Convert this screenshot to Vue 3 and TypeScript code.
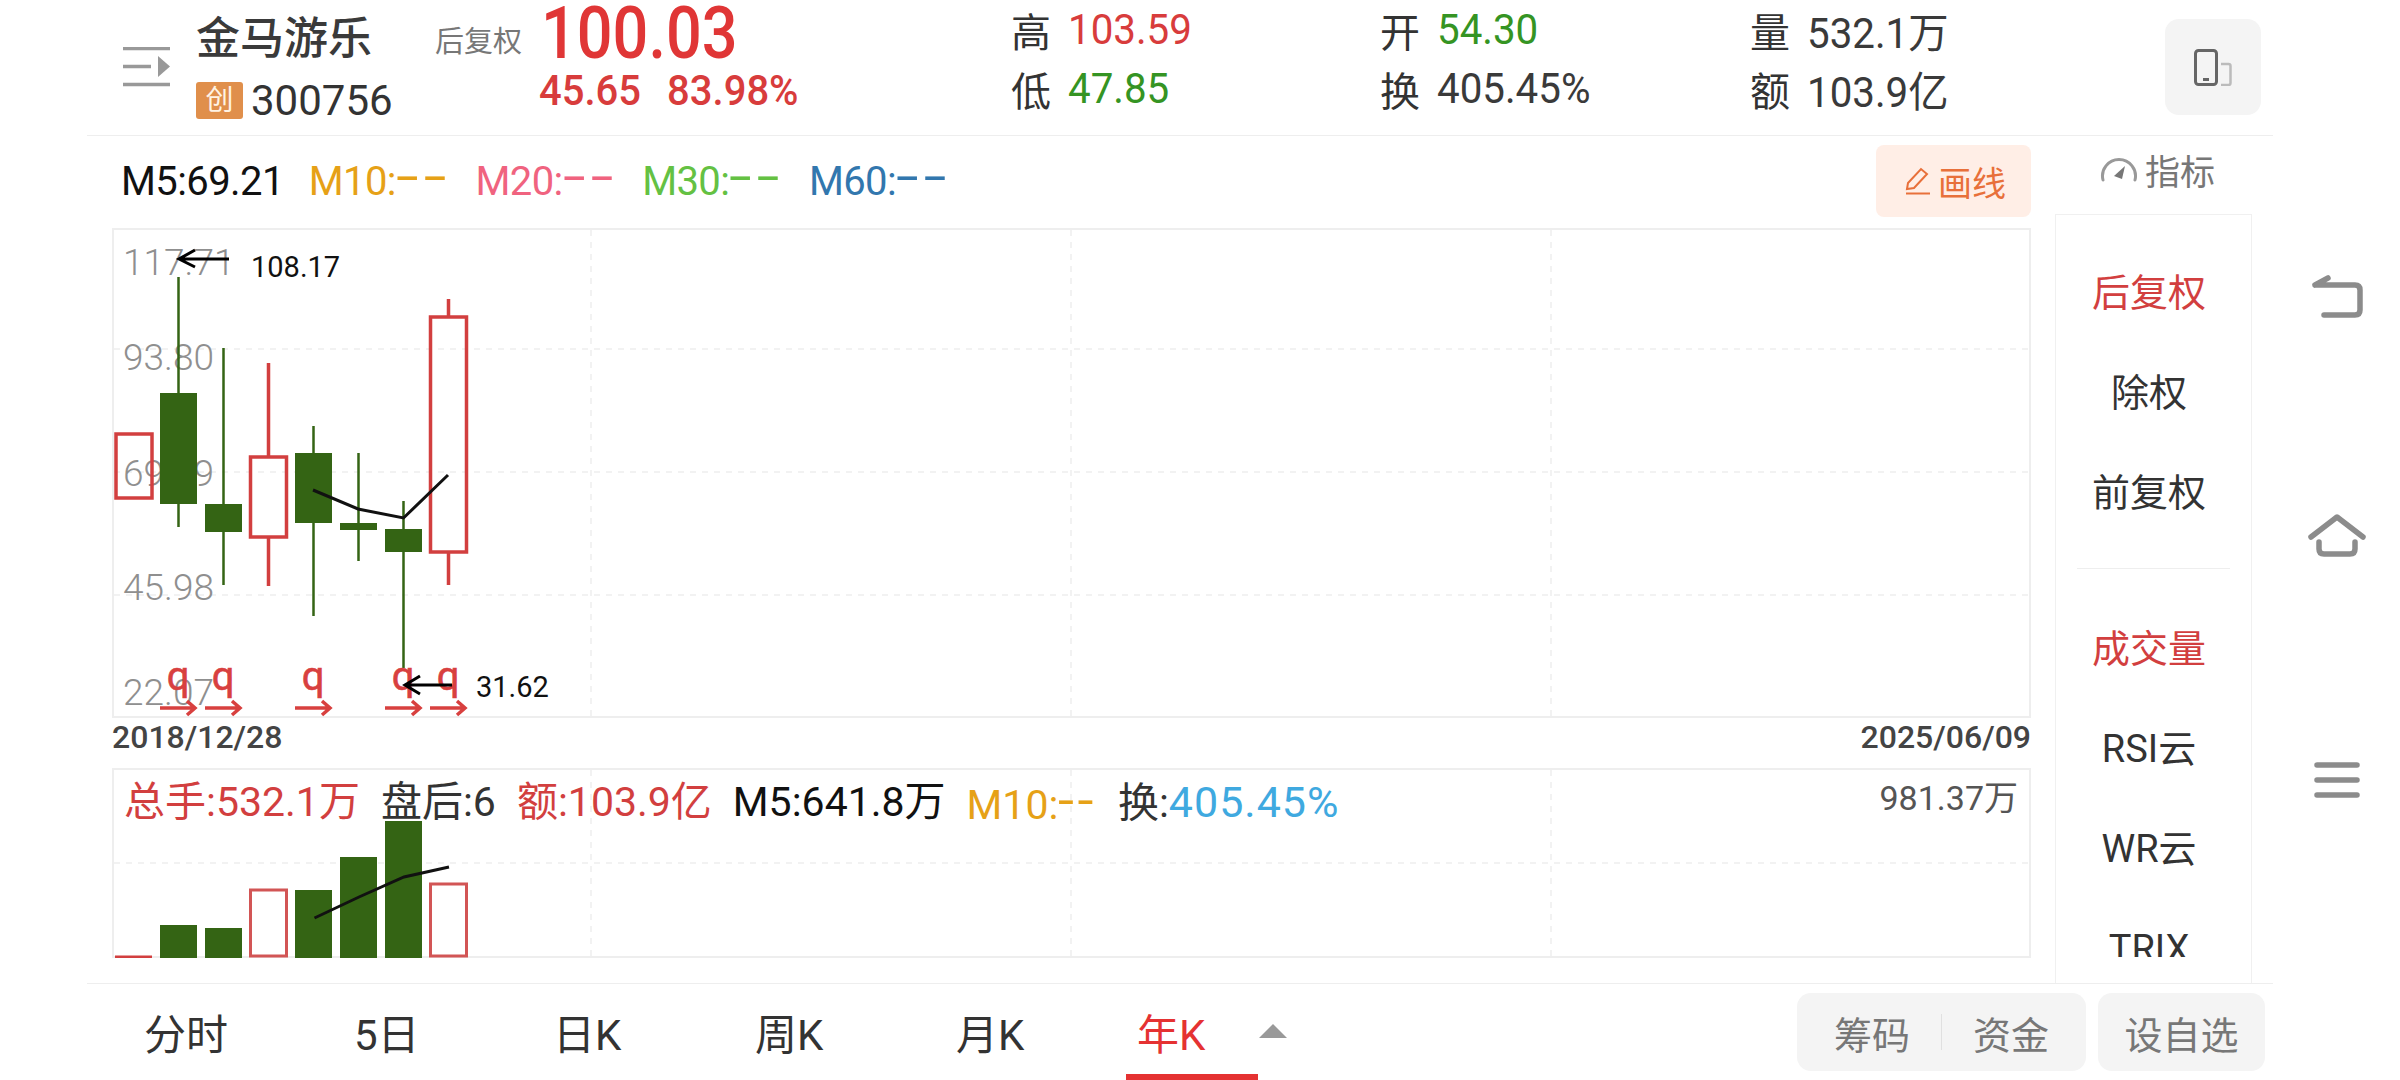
<template>
  <div class="page">
    <div class="main">
      <header class="quote-bar">
        <div class="menu-cell">
          <svg width="47" height="40" viewBox="0 0 47 40">
            <path d="M0 1.5H47M0 19.5H28M0 37.5H47" stroke="#999" stroke-width="3.5" fill="none" />
            <path d="M35 9L47 19.5L35 30Z" fill="#999" />
          </svg>
        </div>
        <div class="name-cell">
          <div class="stock-name">金马游乐</div>
          <div class="stock-code"><span class="badge">创</span><span>300756</span></div>
        </div>
        <div class="adjust">后复权</div>
        <div class="price-cell">
          <div class="price">100.03</div>
          <div class="change"><span>45.65</span><span>83.98%</span></div>
        </div>
        <div v-for="col in statCols" :key="col[0].label" class="stat-cell">
          <div v-for="s in col" :key="s.label" class="stat">
            <span class="stat-label">{{ s.label }}</span>
            <span class="stat-value" :class="s.tone">{{ s.value }}</span>
          </div>
        </div>
        <div class="device-btn">
          <svg width="38" height="37" viewBox="0 0 38 37">
            <path d="M27 15H34.5Q36.5 15 36.5 17V34Q36.5 36 34.5 36H27" fill="none" stroke="#bbb" stroke-width="2.5" />
            <rect x="1.5" y="1.5" width="21" height="34" rx="3" fill="#f4f4f4" stroke="#666" stroke-width="3" />
            <rect x="9" y="29" width="6" height="3" fill="#666" />
          </svg>
        </div>
      </header>

      <div class="body">
        <section class="chart-col">
          <div class="legend">
            <span class="ma ma-black">M5:69.21</span>
            <span class="ma ma-orange">M10:<i class="dash">--</i></span>
            <span class="ma ma-pink">M20:<i class="dash">--</i></span>
            <span class="ma ma-green">M30:<i class="dash">--</i></span>
            <span class="ma ma-blue">M60:<i class="dash">--</i></span>
            <button class="draw-btn">
              <svg width="26" height="28" viewBox="0 0 26 28">
                <path d="M2 22L3 16L16 2L22 7L9 21Z" fill="none" stroke="#e8703a" stroke-width="2" />
                <path d="M1 26.5H25" stroke="#e8703a" stroke-width="2" />
              </svg>
              <span>画线</span>
            </button>
          </div>

          <svg class="price-chart" width="1920" height="490" viewBox="112 228 1920 490">
            <rect x="113" y="229" width="1917" height="488" fill="#fff" stroke="#eee" stroke-width="2" />
            <path v-for="y in [349, 472, 595]" :key="y" :d="`M114 ${y}H2029`" class="grid" />
            <path v-for="x in gridX" :key="x" :d="`M${x} 230V716`" class="grid" />
            <text v-for="l in axisLabels" :key="l.text" x="123" :y="l.y" class="axis">{{ l.text }}</text>
            <g v-for="c in candles" :key="c.x">
              <path
                :d="`M${c.x} ${c.high}V${c.open}M${c.x} ${c.close}V${c.low}`"
                :stroke="c.up ? red : green"
                :stroke-width="c.up ? 3.5 : 2.5"
              />
              <rect
                v-if="c.up"
                :x="c.x - 18"
                :y="c.open"
                width="36"
                :height="c.close - c.open"
                fill="none"
                :stroke="red"
                stroke-width="3.5"
              />
              <rect v-else :x="c.x - 18.5" :y="c.open" width="37" :height="c.close - c.open" :fill="green" />
            </g>
            <polyline points="313,490 358,509 403.5,518 448,475" class="ma-line" />
            <path d="M229 259H179M195 250L179 259L195 267" class="marker" />
            <text x="251" y="277" class="extreme">108.17</text>
            <g v-for="x in signalX" :key="x">
              <text :x="x" y="690" class="signal">q</text>
              <path :d="`M${x - 18} 708H${x + 17}M${x + 9} 701L${x + 17} 708L${x + 9} 715`" class="signal-arrow" />
            </g>
            <path d="M452 685H405M420 676L405 685L420 694" class="marker" />
            <text x="476" y="697" class="extreme">31.62</text>
          </svg>

          <div class="dates"><span>2018/12/28</span><span>2025/06/09</span></div>

          <div class="volume">
            <svg width="1920" height="190" viewBox="112 768 1920 190">
              <rect x="113" y="769" width="1917" height="188" fill="#fff" stroke="#eee" stroke-width="2" />
              <path d="M114 863H2029" class="grid" />
              <path v-for="x in gridX" :key="x" :d="`M${x} 770V956`" class="grid" />
              <path d="M115 957H152" :stroke="red" stroke-width="3" />
              <g v-for="b in volumes" :key="b.x">
                <rect
                  v-if="b.up"
                  :x="b.x - 18"
                  :y="b.top"
                  width="36"
                  :height="956 - b.top"
                  fill="#fff"
                  stroke="#d25555"
                  stroke-width="3"
                />
                <rect v-else :x="b.x - 18.5" :y="b.top" width="37" :height="958 - b.top" :fill="green" />
              </g>
              <polyline points="314.5,918 359,897 404,877 449,867" class="ma-line" />
            </svg>
            <div class="vol-legend">
              <span class="red">总手:532.1万</span>
              <span class="dark">盘后:6</span>
              <span class="red">额:103.9亿</span>
              <span class="ma-black">M5:641.8万</span>
              <span class="ma-orange">M10:<i class="dash">--</i></span>
              <span class="dark">换:<b class="turnover">405.45%</b></span>
            </div>
            <div class="vol-max">981.37万</div>
          </div>
        </section>

        <aside class="side-col">
          <div class="side-head">
            <svg width="38" height="30" viewBox="0 0 38 30">
              <path d="M3 26A16.5 16.5 0 1 1 35 26" fill="none" stroke="#999" stroke-width="3" stroke-linecap="round" />
              <path d="M14 22L25 12L22 25Z" fill="#777" />
            </svg>
            <span>指标</span>
          </div>
          <div class="side-panel">
            <div class="side-list">
              <div v-for="o in adjustOptions" :key="o.text" class="side-item" :class="{ active: o.active }">{{ o.text }}</div>
              <div class="side-divider"></div>
              <div v-for="o in indicatorOptions" :key="o.text" class="side-item" :class="{ active: o.active }">{{ o.text }}</div>
            </div>
          </div>
        </aside>
      </div>

      <footer class="tabs">
        <div v-for="t in tabs" :key="t" class="tab" :class="{ current: t === '年K' }">{{ t }}</div>
        <div class="caret"></div>
        <div class="actions">
          <div class="btn-group"><span>筹码</span><i></i><span>资金</span></div>
          <div class="btn-single">设自选</div>
        </div>
      </footer>
    </div>

    <nav class="sys-nav">
      <svg class="nav-back" width="60" height="50" viewBox="2307 272 60 50">
        <path d="M2315 285H2355Q2360 285 2360 290V310Q2360 315 2355 315H2324M2315 285L2328 278" />
      </svg>
      <svg class="nav-home" width="60" height="50" viewBox="2307 510 60 50">
        <path d="M2311 537L2337 517L2363 537M2319 542V549Q2319 554 2324 554H2350Q2355 554 2355 549V542" />
      </svg>
      <svg class="nav-menu" width="60" height="50" viewBox="2307 755 60 50">
        <path d="M2317 765H2357M2317 780H2357M2317 795H2357" />
      </svg>
    </nav>
  </div>
</template>

<script setup lang="ts">
interface Stat {
  label: string
  value: string
  tone?: string
}

interface Candle {
  x: number
  high: number
  low: number
  open: number
  close: number
  up: boolean
}

const red = '#d23f3f'
const green = '#346414'

const statCols: Stat[][] = [
  [
    { label: '高', value: '103.59', tone: 'red' },
    { label: '低', value: '47.85', tone: 'green' },
  ],
  [
    { label: '开', value: '54.30', tone: 'green' },
    { label: '换', value: '405.45%' },
  ],
  [
    { label: '量', value: '532.1万' },
    { label: '额', value: '103.9亿' },
  ],
]

const gridX = [591, 1071, 1551]

const axisLabels = [
  { text: '117.71', y: 275 },
  { text: '93.80', y: 370 },
  { text: '69.89', y: 486 },
  { text: '45.98', y: 600 },
  { text: '22.07', y: 705 },
]

const candles: Candle[] = [
  { x: 134, high: 434, low: 498, open: 434, close: 498, up: true },
  { x: 178.5, high: 277, low: 527, open: 393, close: 504, up: false },
  { x: 223.5, high: 348, low: 585, open: 504, close: 532, up: false },
  { x: 268.5, high: 363, low: 586, open: 457, close: 537, up: true },
  { x: 313.5, high: 426, low: 616, open: 453, close: 523, up: false },
  { x: 358.5, high: 453, low: 561, open: 523, close: 530, up: false },
  { x: 403.5, high: 501, low: 668, open: 529, close: 552, up: false },
  { x: 448.5, high: 299, low: 585, open: 317, close: 552, up: true },
]

const signalX = [178, 223, 313, 403, 448]

const volumes = [
  { x: 178.5, top: 925, up: false },
  { x: 223.5, top: 928, up: false },
  { x: 268.5, top: 890, up: true },
  { x: 313.5, top: 890, up: false },
  { x: 358.5, top: 857, up: false },
  { x: 403.5, top: 821, up: false },
  { x: 448.5, top: 884, up: true },
]

const adjustOptions = [
  { text: '后复权', active: true },
  { text: '除权', active: false },
  { text: '前复权', active: false },
]

const indicatorOptions = [
  { text: '成交量', active: true },
  { text: 'RSI云', active: false },
  { text: 'WR云', active: false },
  { text: 'TRIX', active: false },
]

const tabs = ['分时', '5日', '日K', '周K', '月K', '年K']
</script>

<style>
html,
body {
  margin: 0;
  background: #fff;
}
</style>

<style scoped>
.page {
  display: flex;
  width: 2400px;
  height: 1080px;
  overflow: hidden;
  background: #fff;
  color: #333;
  font-family: Roboto, "Noto Sans CJK SC", sans-serif;
}

.main {
  width: 2186px;
  margin-left: 87px;
  flex-shrink: 0;
}

/* quote header */
.quote-bar {
  display: grid;
  grid-template-columns: 109px 239px 105px 472px 369px 370px 414px 96px;
  height: 135px;
  box-sizing: content-box;
  border-bottom: 1px solid #eee;
}

.menu-cell {
  padding: 47px 0 0 36px;
}

.stock-name {
  margin-top: 14px;
  font-size: 44px;
  line-height: 50px;
  font-weight: 500;
  color: #3a3a3a;
}

.stock-code {
  display: flex;
  align-items: center;
  margin-top: 18px;
  font-size: 42px;
  line-height: 37px;
}

.badge {
  width: 47px;
  height: 37px;
  margin-right: 8px;
  border-radius: 3px;
  background: #e08f4b;
  color: #fff3e4;
  font-size: 28px;
  line-height: 37px;
  text-align: center;
}

.adjust {
  padding-top: 20px;
  font-size: 29px;
  line-height: 44px;
  color: #777;
}

.price {
  height: 66px;
  margin: 1px 0 0 1px;
  font-size: 72px;
  line-height: 66px;
  font-weight: 500;
  color: #e03636;
  transform: scaleX(0.875);
  transform-origin: left;
}

.change {
  display: flex;
  gap: 28px;
  width: 300px;
  margin-left: -1px;
  font-size: 43px;
  line-height: 46px;
  font-weight: 500;
  color: #d83c3c;
  transform: scaleX(0.93);
  transform-origin: left;
}

.stat {
  display: flex;
  align-items: center;
  gap: 17px;
  height: 59px;
  margin-left: -1px;
  white-space: nowrap;
}

.stat-label {
  font-size: 40px;
}

.stat-value {
  font-size: 42px;
  color: #3a3a3a;
  transform: scaleX(0.96);
  transform-origin: left;
}

.stat-value.red {
  color: #d83c3c;
}

.stat-value.green {
  color: #359423;
}

.device-btn {
  display: flex;
  align-items: center;
  justify-content: center;
  height: 96px;
  margin-top: 19px;
  border-radius: 14px;
  background: #f4f4f4;
}

.body {
  display: flex;
  height: 847px;
}

.chart-col {
  width: 1944px;
  padding-left: 25px;
  box-sizing: border-box;
}

/* moving average legend */
.legend {
  display: flex;
  align-items: flex-start;
  height: 92px;
  padding-left: 9px;
  gap: 25px;
  font-size: 40px;
  line-height: 60px;
  letter-spacing: -0.6px;
}

.ma {
  display: block;
  height: 60px;
  margin-top: 16px;
  white-space: nowrap;
}

/* the app draws its empty values as long dashes */
.dash {
  display: inline-block;
  margin-right: 22px;
  font-size: 48px;
  font-style: normal;
  line-height: 1;
  letter-spacing: 3px;
  vertical-align: 2px;
  transform: scaleX(1.7);
  transform-origin: left;
}

.ma-black {
  color: #111;
}

.ma-orange {
  color: #e6a117;
}

.ma-pink {
  color: #f0637f;
}

.ma-green {
  color: #64c143;
}

.ma-blue {
  color: #3277ae;
}

.draw-btn {
  display: flex;
  align-items: center;
  gap: 7px;
  height: 72px;
  width: 155px;
  margin: 9px 0 0 auto;
  padding: 0 0 0 29px;
  border: 0;
  border-radius: 8px;
  background: #ffeee6;
  color: #e8703a;
  font-family: inherit;
  font-size: 34px;
  letter-spacing: 0;
}

.price-chart,
.volume svg {
  display: block;
}

.grid {
  stroke: #eee;
  stroke-width: 1.5;
  stroke-dasharray: 6 6;
  fill: none;
}

.axis {
  font-size: 37px;
  font-weight: 300;
  fill: #8f8f8f;
}

.ma-line {
  fill: none;
  stroke: #111;
  stroke-width: 3;
}

.marker {
  fill: none;
  stroke: #000;
  stroke-width: 3;
}

.extreme {
  font-size: 29px;
  fill: #111;
}

.signal {
  font-size: 40px;
  text-anchor: middle;
  fill: #d8403f;
  stroke: #d8403f;
  stroke-width: 0.6;
}

.signal-arrow {
  fill: none;
  stroke: #d8403f;
  stroke-width: 3.5;
}

.dates {
  display: flex;
  justify-content: space-between;
  width: 1919px;
  height: 50px;
  font-size: 32px;
  font-weight: 500;
  line-height: 38px;
  color: #444;
}

.volume {
  position: relative;
  width: 1920px;
  height: 190px;
}

.vol-legend {
  position: absolute;
  top: 9px;
  left: 12px;
  display: flex;
  gap: 21px;
  font-size: 41px;
  line-height: 50px;
  white-space: nowrap;
}

.vol-legend .dash {
  margin-right: 6px;
  transform: scaleX(1.2);
}

.vol-legend .red {
  color: #d23f3f;
}

.vol-legend .dark {
  color: #333;
}

.turnover {
  font-size: 43px;
  font-weight: 400;
  letter-spacing: 1px;
  color: #3fa9e0;
}

.vol-max {
  position: absolute;
  top: 8px;
  right: 14px;
  font-size: 34px;
  line-height: 44px;
  color: #555;
}

/* indicator column */
.side-col {
  width: 197px;
  margin-left: 24px;
}

.side-head {
  display: flex;
  justify-content: center;
  align-items: center;
  gap: 7px;
  height: 78px;
  padding: 0 0 12px 8px;
  box-sizing: border-box;
  font-size: 35px;
  color: #777;
}

.side-panel {
  height: 769px;
  box-sizing: border-box;
  border: 1px solid #f0f0f0;
  border-bottom: 0;
}

.side-list {
  height: 742px;
  padding: 28px 9px 0 0;
  box-sizing: border-box;
  overflow: hidden;
}

.side-item {
  height: 100px;
  font-size: 38px;
  line-height: 100px;
  text-align: center;
  color: #333;
}

.side-item.active {
  color: #d23f3f;
}

.side-divider {
  height: 1px;
  margin: 25px 12px 30px 21px;
  background: #eee;
}

/* bottom tabs */
.tabs {
  display: flex;
  height: 96px;
  padding-left: 57px;
  border-top: 1px solid #eee;
}

.tab {
  height: 96px;
  padding-top: 27px;
  box-sizing: border-box;
  font-size: 42px;
  line-height: 50px;
  color: #333;
}

.tab:nth-child(1) {
  width: 210px;
}

.tab:nth-child(2) {
  width: 199px;
}

.tab:nth-child(3) {
  width: 202px;
}

.tab:nth-child(4) {
  width: 201px;
}

.tab:nth-child(5) {
  width: 170px;
}

.tab.current {
  width: 132px;
  padding-left: 11px;
  border-bottom: 6px solid #e53232;
  color: #e53232;
}

.caret {
  width: 0;
  height: 0;
  margin: 40px 0 0 1px;
  border-left: 14px solid transparent;
  border-right: 14px solid transparent;
  border-bottom: 14px solid #999;
}

.actions {
  display: flex;
  gap: 12px;
  margin: 9px 8px 0 auto;
}

.btn-group,
.btn-single {
  display: flex;
  align-items: center;
  height: 78px;
  border-radius: 14px;
  background: #f4f4f4;
  color: #777;
  font-size: 38px;
}

.btn-group {
  width: 289px;
  justify-content: center;
  gap: 31px;
}

.btn-group i {
  width: 1px;
  height: 36px;
  background: #e0e0e0;
}

.btn-single {
  width: 167px;
  justify-content: center;
}

/* system navigation */
.sys-nav {
  display: flex;
  flex-direction: column;
  padding: 272px 0 0 34px;
}

.sys-nav svg {
  fill: none;
  stroke: #8c8c8c;
  stroke-width: 5.5;
  stroke-linecap: round;
  stroke-linejoin: round;
}

.nav-home {
  margin-top: 188px;
}

.nav-menu {
  margin-top: 195px;
}
</style>
